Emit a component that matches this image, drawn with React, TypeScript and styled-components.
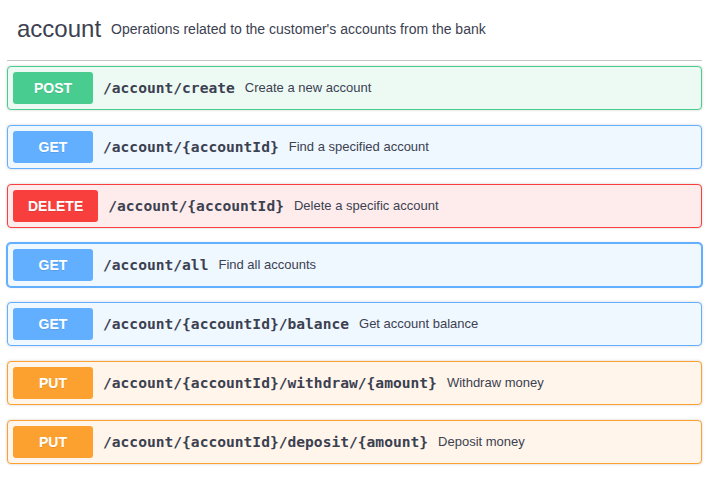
import React from "react";
import styled, { createGlobalStyle } from "styled-components";

const Global = createGlobalStyle`
  html, body { margin: 0; padding: 0; background: #ffffff; }
  body { font-family: "Liberation Sans", Arial, sans-serif; color: #3b4151; }
`;

type Method = "post" | "get" | "delete" | "put";

const palette: Record<Method, { main: string; bg: string }> = {
  post: { main: "#49cc90", bg: "#edfaf4" },
  get: { main: "#61affe", bg: "#eff7ff" },
  delete: { main: "#f93e3e", bg: "#feecec" },
  put: { main: "#fca130", bg: "#fff5ea" },
};

const Page = styled.div`
  padding: 0 17px 0 7px;
`;

const TagHeader = styled.h3`
  display: flex;
  align-items: center;
  box-sizing: border-box;
  height: 61px;
  margin: 0 0 5px;
  padding: 0 20px 3px 10px;
  border-bottom: 1px solid rgba(59, 65, 81, 0.3);
  font-weight: 400;
`;

const TagName = styled.span`
  font-size: 24px;
  color: #3b4151;
`;

const TagDesc = styled.small`
  flex: 1;
  padding: 0 10px;
  font-size: 14px;
  color: #3b4151;
`;

const Block = styled.div<{ $m: Method; $focus?: boolean }>`
  display: flex;
  align-items: center;
  box-sizing: border-box;
  height: 44px;
  margin: 0 0 15px;
  padding: 5px;
  border: 1px solid ${(p) => palette[p.$m].main};
  border-radius: 4px;
  background: ${(p) => palette[p.$m].bg};
  box-shadow: ${(p) =>
    p.$focus
      ? `0 0 0 1px ${palette[p.$m].main}, 0 0 3px rgba(0,0,0,0.19)`
      : "0 0 3px rgba(0,0,0,0.19)"};
`;

const Badge = styled.span<{ $m: Method }>`
  box-sizing: border-box;
  min-width: 80px;
  height: 32px;
  padding: 0 15px;
  display: flex;
  align-items: center;
  justify-content: center;
  border-radius: 3px;
  background: ${(p) => palette[p.$m].main};
  color: #ffffff;
  font-size: 14px;
  font-weight: 700;
  text-shadow: 0 1px 0 rgba(0, 0, 0, 0.1);
`;

const Path = styled.span`
  padding: 0 10px;
  margin-bottom: 2px;
  font-family: "DejaVu Sans Mono", monospace;
  font-size: 14.6px;
  font-weight: 700;
  color: #3b4151;
  white-space: nowrap;
`;

const Desc = styled.span`
  flex: 1;
  margin-bottom: 2px;
  font-size: 13px;
  color: #3b4151;
`;

const ops: { m: Method; path: string; desc: string; focus?: boolean }[] = [
  { m: "post", path: "/account/create", desc: "Create a new account" },
  { m: "get", path: "/account/{accountId}", desc: "Find a specified account" },
  { m: "delete", path: "/account/{accountId}", desc: "Delete a specific account" },
  { m: "get", path: "/account/all", desc: "Find all accounts", focus: true },
  { m: "get", path: "/account/{accountId}/balance", desc: "Get account balance" },
  { m: "put", path: "/account/{accountId}/withdraw/{amount}", desc: "Withdraw money" },
  { m: "put", path: "/account/{accountId}/deposit/{amount}", desc: "Deposit money" },
];

export default function App() {
  return (
    <Page>
      <Global />
      <TagHeader>
        <TagName>account</TagName>
        <TagDesc>Operations related to the customer's accounts from the bank</TagDesc>
      </TagHeader>
      {ops.map((o, i) => (
        <Block key={i} $m={o.m} $focus={o.focus}>
          <Badge $m={o.m}>{o.m.toUpperCase()}</Badge>
          <Path>{o.path}</Path>
          <Desc>{o.desc}</Desc>
        </Block>
      ))}
    </Page>
  );
}
